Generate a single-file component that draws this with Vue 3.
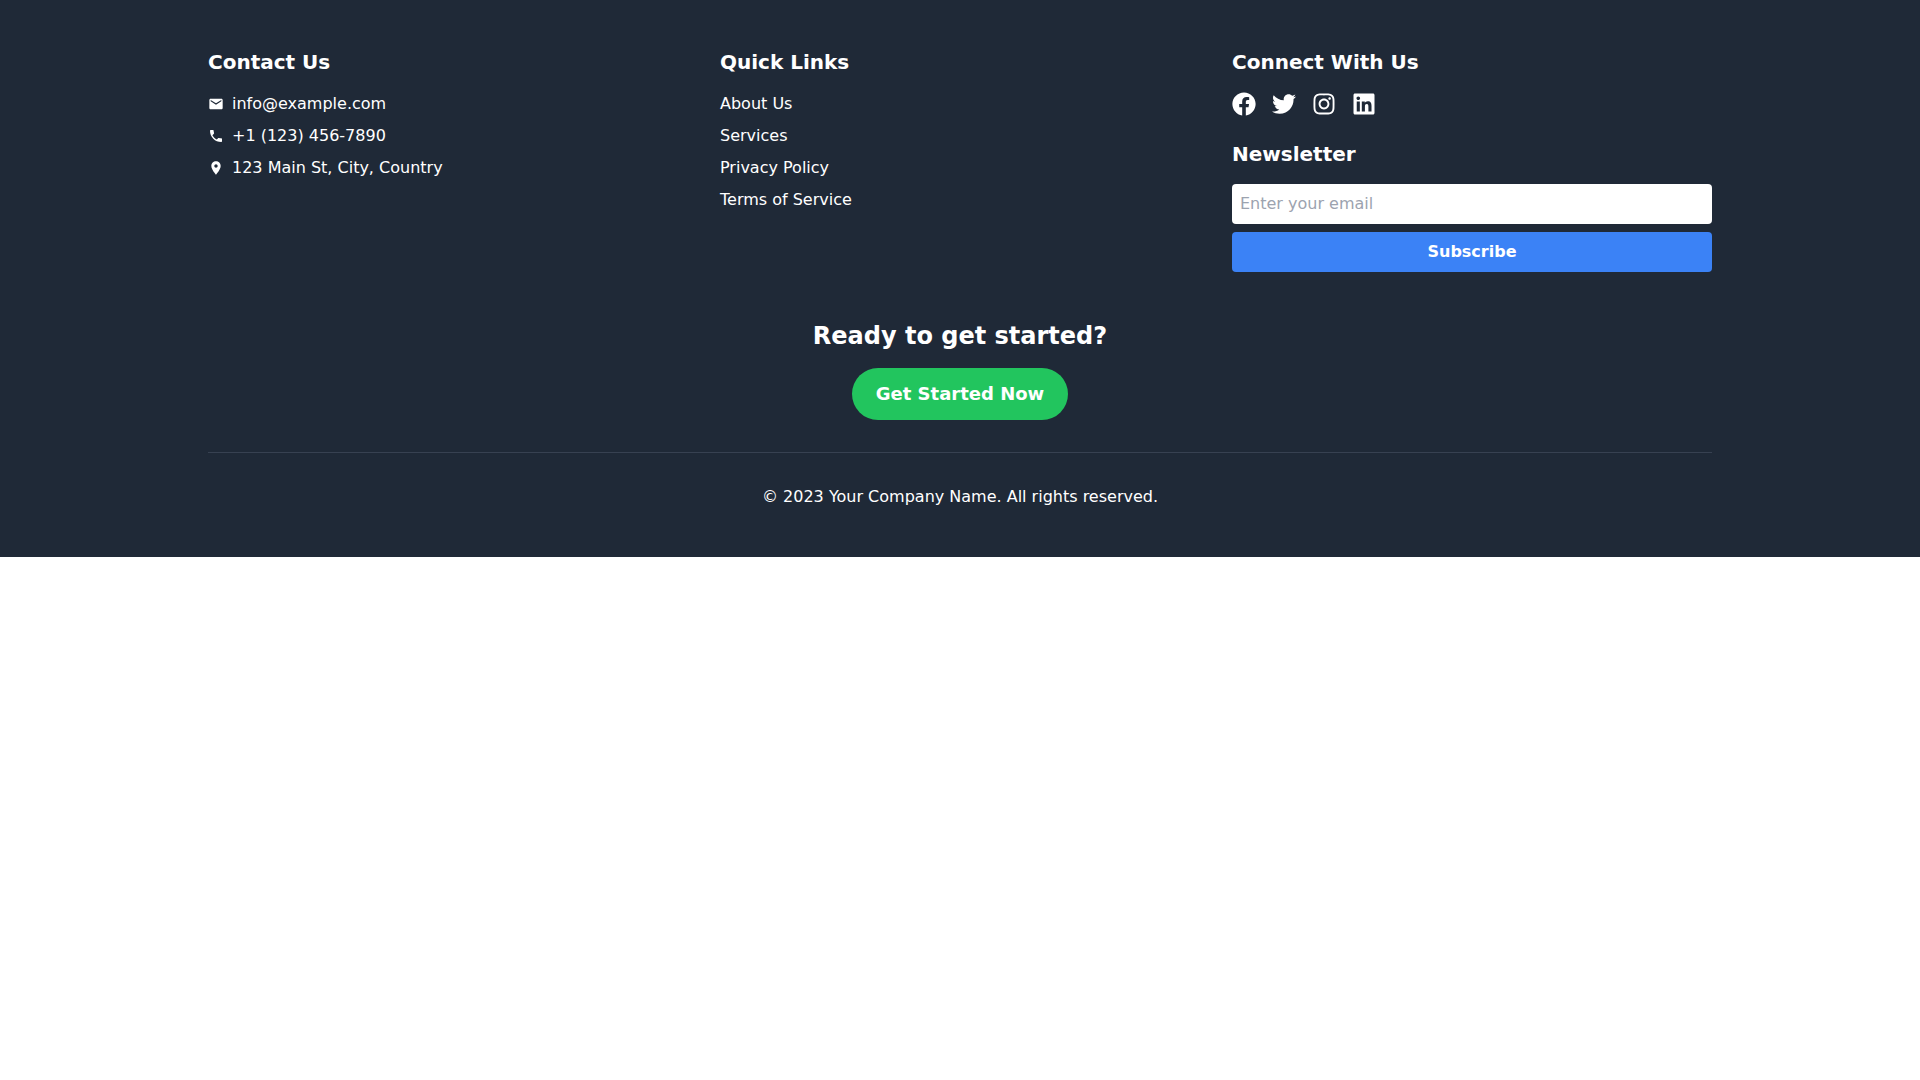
<template>
    <footer class="site-footer">
        <div class="container">
            <div class="columns">
                <section>
                    <h2 class="heading">Contact Us</h2>
                    <ul class="list">
                        <li v-for="item in contacts" :key="item.text" class="contact">
                            <svg class="contact-icon" viewBox="0 0 24 24" aria-hidden="true">
                                <path :d="item.icon" />
                            </svg>
                            <span>{{ item.text }}</span>
                        </li>
                    </ul>
                </section>

                <section>
                    <h2 class="heading">Quick Links</h2>
                    <ul class="list">
                        <li v-for="link in links" :key="link">
                            <a href="#">{{ link }}</a>
                        </li>
                    </ul>
                </section>

                <section>
                    <h2 class="heading">Connect With Us</h2>
                    <div class="socials">
                        <a v-for="social in socials" :key="social.name" href="#" :aria-label="social.name">
                            <svg class="social-icon" :viewBox="social.viewBox" aria-hidden="true">
                                <path :d="social.icon" />
                            </svg>
                        </a>
                    </div>
                    <h2 class="heading">Newsletter</h2>
                    <form class="newsletter" @submit.prevent="email = ''">
                        <input v-model="email" type="email" placeholder="Enter your email"
                            aria-label="Enter your email" />
                        <button type="submit">Subscribe</button>
                    </form>
                </section>
            </div>

            <div class="cta">
                <h2>Ready to get started?</h2>
                <button type="button">Get Started Now</button>
            </div>

            <div class="copyright">
                <p>© 2023 Your Company Name. All rights reserved.</p>
            </div>
        </div>
    </footer>
</template>

<script setup>
import { ref } from 'vue';

const email = ref('');

const contacts = [
    {
        text: 'info@example.com',
        icon: 'M20 4H4c-1.1 0-1.99.9-1.99 2L2 18c0 1.1.9 2 2 2h16c1.1 0 2-.9 2-2V6c0-1.1-.9-2-2-2zm0 4l-8 5-8-5V6l8 5 8-5v2z'
    },
    {
        text: '+1 (123) 456-7890',
        icon: 'M6.62 10.79c1.44 2.83 3.76 5.14 6.59 6.59l2.2-2.2c.27-.27.67-.36 1.02-.24 1.12.37 2.33.57 3.57.57.55 0 1 .45 1 1V20c0 .55-.45 1-1 1-9.39 0-17-7.61-17-17 0-.55.45-1 1-1h3.5c.55 0 1 .45 1 1 0 1.25.2 2.45.57 3.57.11.35.03.74-.25 1.02l-2.2 2.2z'
    },
    {
        text: '123 Main St, City, Country',
        icon: 'M12 2C8.13 2 5 5.13 5 9c0 5.25 7 13 7 13s7-7.75 7-13c0-3.87-3.13-7-7-7zm0 9.5c-1.38 0-2.5-1.12-2.5-2.5s1.12-2.5 2.5-2.5 2.5 1.12 2.5 2.5-1.12 2.5-2.5 2.5z'
    }
];

const links = ['About Us', 'Services', 'Privacy Policy', 'Terms of Service'];

const socials = [
    {
        name: 'Facebook',
        viewBox: '0 0 512 512',
        icon: 'M504 256C504 119 393 8 256 8S8 119 8 256c0 123.78 90.69 226.38 209.25 245V327.69h-63V256h63v-54.64c0-62.15 37-96.48 93.67-96.48 27.14 0 55.52 4.84 55.52 4.84v61h-31.28c-30.8 0-40.41 19.12-40.41 38.73V256h68.78l-11 71.69h-57.78V501C413.31 482.38 504 379.78 504 256z'
    },
    {
        name: 'Twitter',
        viewBox: '0 0 512 512',
        icon: 'M459.37 151.716c.325 4.548.325 9.097.325 13.645 0 138.72-105.583 298.558-298.558 298.558-59.452 0-114.68-17.219-161.137-47.106 8.447.974 16.568 1.299 25.34 1.299 49.055 0 94.213-16.568 130.274-44.832-46.132-.975-84.792-31.188-98.112-72.772 6.498.974 12.995 1.624 19.818 1.624 9.421 0 18.843-1.3 27.614-3.573-48.081-9.747-84.143-51.98-84.143-102.985v-1.299c13.969 7.797 30.214 12.67 47.431 13.319-28.264-18.843-46.781-51.005-46.781-87.391 0-19.492 5.197-37.36 14.294-52.954 51.655 63.675 129.3 105.258 216.365 109.807-1.624-7.797-2.599-15.918-2.599-24.04 0-57.828 46.782-104.934 104.934-104.934 30.213 0 57.502 12.67 76.67 33.137 23.715-4.548 46.456-13.32 66.599-25.34-7.798 24.366-24.366 44.833-46.132 57.827 21.117-2.273 41.584-8.122 60.426-16.243-14.292 20.791-32.161 39.308-52.628 54.253z'
    },
    {
        name: 'Instagram',
        viewBox: '0 0 448 512',
        icon: 'M224.1 141c-63.6 0-114.9 51.3-114.9 114.9s51.3 114.9 114.9 114.9S339 319.5 339 255.9 287.7 141 224.1 141zm0 189.6c-41.1 0-74.7-33.5-74.7-74.7s33.5-74.7 74.7-74.7 74.7 33.5 74.7 74.7-33.6 74.7-74.7 74.7zm146.4-194.3c0 14.9-12 26.8-26.8 26.8-14.9 0-26.8-12-26.8-26.8s12-26.8 26.8-26.8 26.8 12 26.8 26.8zm76.1 27.2c-1.7-35.9-9.9-67.7-36.2-93.9-26.2-26.2-58-34.4-93.9-36.2-37-2.1-147.9-2.1-184.9 0-35.8 1.7-67.6 9.9-93.9 36.1s-34.4 58-36.2 93.9c-2.1 37-2.1 147.9 0 184.9 1.7 35.9 9.9 67.7 36.2 93.9s58 34.4 93.9 36.2c37 2.1 147.9 2.1 184.9 0 35.9-1.7 67.7-9.9 93.9-36.2 26.2-26.2 34.4-58 36.2-93.9 2.1-37 2.1-147.8 0-184.8zM398.8 388c-7.8 19.6-22.9 34.7-42.6 42.6-29.5 11.7-99.5 9-132.1 9s-102.7 2.6-132.1-9c-19.6-7.8-34.7-22.9-42.6-42.6-11.7-29.5-9-99.5-9-132.1s-2.6-102.7 9-132.1c7.8-19.6 22.9-34.7 42.6-42.6 29.5-11.7 99.5-9 132.1-9s102.7-2.6 132.1 9c19.6 7.8 34.7 22.9 42.6 42.6 11.7 29.5 9 99.5 9 132.1s2.7 102.7-9 132.1z'
    },
    {
        name: 'LinkedIn',
        viewBox: '0 0 448 512',
        icon: 'M416 32H31.9C14.3 32 0 46.5 0 64.3v383.4C0 465.5 14.3 480 31.9 480H416c17.6 0 32-14.5 32-32.3V64.3c0-17.8-14.4-32.3-32-32.3zM135.4 416H69V202.2h66.5V416zm-33.2-243c-21.3 0-38.5-17.3-38.5-38.5S80.9 96 102.2 96c21.2 0 38.5 17.3 38.5 38.5 0 21.3-17.2 38.5-38.5 38.5zm282.1 243h-66.4V312c0-24.8-.5-56.7-34.5-56.7-34.6 0-39.9 27-39.9 54.9V416h-66.4V202.2h63.7v29.2h.9c8.9-16.8 30.6-34.5 62.9-34.5 67.2 0 79.7 44.3 79.7 101.9V416z'
    }
];
</script>

<style>
body {
    background: #fff;
}
</style>

<style scoped>
.site-footer {
    padding: 48px 0;
    background: #1f2937;
    color: #fff;
    font-family: "DejaVu Sans", sans-serif;
    font-size: 16px;
    line-height: 24px;
}

.container {
    box-sizing: border-box;
    max-width: 1536px;
    margin: 0 auto;
    padding: 0 16px;
}

.columns {
    display: grid;
    grid-template-columns: repeat(3, minmax(0, 1fr));
    gap: 32px;
}

.heading {
    margin: 0 0 16px;
    font-size: 20px;
    font-weight: 700;
    line-height: 28px;
}

.list {
    display: flex;
    flex-direction: column;
    gap: 8px;
    margin: 0;
    padding: 0;
    list-style: none;
}

.contact {
    display: flex;
    align-items: center;
    gap: 8px;
}

.contact-icon {
    width: 16px;
    height: 16px;
    fill: currentColor;
}

a {
    color: inherit;
    text-decoration: none;
}

a:hover {
    color: #60a5fa;
}

.socials {
    display: flex;
    gap: 16px;
    margin-bottom: 24px;
}

.social-icon {
    display: block;
    width: 24px;
    height: 24px;
    fill: currentColor;
}

.newsletter {
    display: flex;
    flex-direction: column;
    gap: 8px;
}

input,
button {
    border: 0;
    border-radius: 4px;
    padding: 8px;
    font: inherit;
}

input {
    background: #fff;
    color: #1f2937;
    line-height: 24px;
}

input::placeholder {
    color: #9ca3af;
    opacity: 1;
}

button {
    background: #3b82f6;
    color: #fff;
    font-weight: 700;
    cursor: pointer;
}

.cta {
    margin-top: 48px;
    text-align: center;
}

.cta h2 {
    margin: 0 0 16px;
    font-size: 24px;
    font-weight: 700;
    line-height: 32px;
}

.cta button {
    padding: 12px 24px;
    border-radius: 9999px;
    background: #22c55e;
    font-size: 18px;
    line-height: 28px;
    vertical-align: top;
}

.copyright {
    margin-top: 32px;
    padding-top: 32px;
    border-top: 1px solid #374151;
    text-align: center;
}

.copyright p {
    margin: 0;
}

@media (max-width: 767px) {
    .columns {
        grid-template-columns: 1fr;
    }
}
</style>
